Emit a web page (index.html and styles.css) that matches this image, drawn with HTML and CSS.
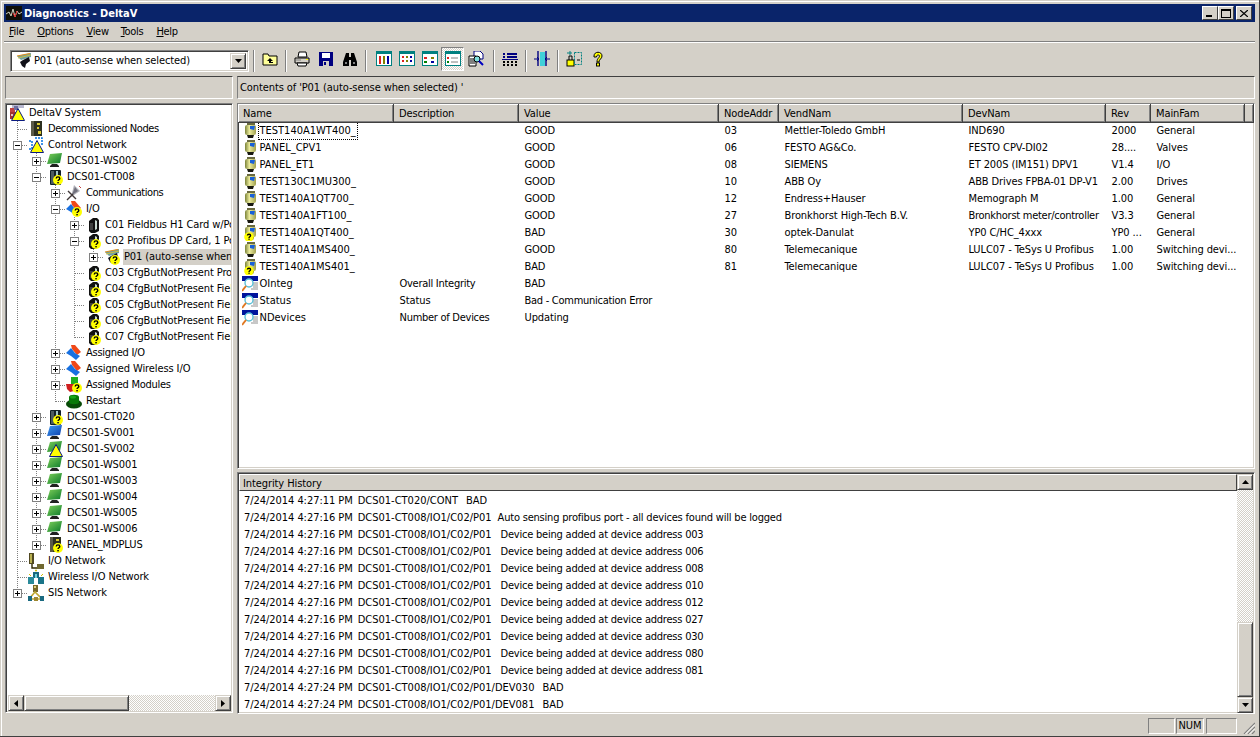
FILE: index.html
```html
<!DOCTYPE html>
<html lang="en">
<head>
<meta charset="utf-8">
<title>Diagnostics - DeltaV</title>
<link rel="stylesheet" href="styles.css">
</head>
<body>
<svg class="defs" width="0" height="0" aria-hidden="true">
  <defs>
    <linearGradient id="gm" x1="0" y1="0" x2="1" y2="1"><stop offset="0" stop-color="#7fd05a"/><stop offset="1" stop-color="#0a7a2a"/></linearGradient>
    <linearGradient id="bm" x1="0" y1="0" x2="1" y2="1"><stop offset="0" stop-color="#3f9bf0"/><stop offset="1" stop-color="#0a3fb0"/></linearGradient>
    <linearGradient id="dv" x1="0" y1="0" x2="1" y2="0"><stop offset="0" stop-color="#7a8238"/><stop offset=".4" stop-color="#ecec9c"/><stop offset="1" stop-color="#a0a050"/></linearGradient>
    <symbol id="q" viewBox="0 0 16 16"><circle cx="11" cy="11" r="5" fill="#ffff00"/><path d="M9.2 9.4c0-2 3.6-2 3.600 0 0 1.300-1.800 1.300-1.800 2.700" fill="none" stroke="#000" stroke-width="1.400"/><rect x="10.300" y="13" width="1.500" height="1.400" fill="#000"/></symbol>
    <symbol id="warn" viewBox="0 0 16 16"><path d="M9 3.500 15.500 15.500H2.500Z" fill="#ffff00" stroke="#0a1a80" stroke-width="1"/></symbol>
    <symbol id="sys" viewBox="0 0 16 16"><rect x="3" y="0" width="12" height="3" fill="#b8b8d0"/><rect x="1" y="3" width="5" height="4" fill="#c04040"/><rect x="1" y="7" width="6" height="7" fill="#a03030"/><rect x="2" y="9" width="2" height="2" fill="#e0c0c0"/><rect x="5" y="1" width="4" height="4" fill="#7070a0"/></symbol>
    <symbol id="decom" viewBox="0 0 16 16"><rect x="3" y="0" width="11" height="15" fill="#2c3020"/><rect x="3" y="0" width="3" height="15" fill="#5a5a48"/><rect x="9" y="2" width="3" height="2" fill="#d8c830"/><rect x="9" y="6" width="2" height="2" fill="#d8c830"/><rect x="10" y="10" width="3" height="3" fill="#d8c830"/></symbol>
    <symbol id="net" viewBox="0 0 16 16"><path d="M1 4H4V12H1M7 1H14V8" fill="none" stroke="#0070e0" stroke-width="1.500" stroke-dasharray="2 1"/></symbol>
    <symbol id="mon" viewBox="0 0 16 16"><path d="M3 1 15 0 13 10 0 11Z" fill="url(#gm)"/><path d="M5 11H10L12 13V14H3V13Z" fill="#202020"/></symbol>
    <symbol id="monb" viewBox="0 0 16 16"><path d="M3 1 15 0 13 10 0 11Z" fill="url(#bm)"/><path d="M5 11H10L12 13V14H3V13Z" fill="#202020"/></symbol>
    <symbol id="ctrl" viewBox="0 0 16 16"><rect x="3" y="1" width="11" height="15" rx="1" fill="#102028"/><rect x="4" y="2" width="3" height="13" fill="#4a5a60"/><rect x="9" y="2" width="2" height="7" fill="#a0c8c8"/></symbol>
    <symbol id="card" viewBox="0 0 16 16"><path d="M4 4 8 1H12L14 3V14L10 16H6L4 14Z" fill="#101010"/><path d="M10 3 12 4V12L10 13Z" fill="#c8d8d0"/><rect x="5" y="6" width="3" height="7" fill="#404040"/></symbol>
    <symbol id="comm" viewBox="0 0 16 16"><path d="M8 0 14 6 5 12Z" fill="#b0b0b8"/><path d="M9 2 12 6 6 10Z" fill="#70707c"/><path d="M2 6 10 14M1 15 7 9" stroke="#403838" stroke-width="1.400"/><path d="M13 1 15 3" stroke="#c04040"/></symbol>
    <symbol id="io" viewBox="0 0 16 16"><path d="M5 0H9L15 7 11 10 6 4Z" fill="#f04818"/><path d="M0 8 5 3 9 8 14 11 10 15 5 11Z" fill="#1870e0"/></symbol>
    <symbol id="amod" viewBox="0 0 16 16"><rect x="5" y="0" width="7" height="7" fill="#20b020"/><path d="M0 7H8V14L4 15 1 12Z" fill="#d02020"/><rect x="8" y="7" width="5" height="3" fill="#108010"/></symbol>
    <symbol id="rst" viewBox="0 0 16 16"><ellipse cx="8" cy="11" rx="8" ry="4.500" fill="#064a06"/><path d="M3 9V4C3 1 13 1 13 4V9C13 12 3 12 3 9Z" fill="#087808"/><ellipse cx="7" cy="4" rx="3" ry="1.500" fill="#18a818"/></symbol>
    <symbol id="port" viewBox="0 0 16 16"><path d="M1 3 15 0V4L5 7Z" fill="#70a0a0"/><path d="M1 3 14 0.500" stroke="#e09020" stroke-width="1.200"/><path d="M2 5 15 2" stroke="#d0c040"/><path d="M7 7 13 4 14 8 10 11 9 15 6 13 4 9Z" fill="#101018"/></symbol>
    <symbol id="ionet" viewBox="0 0 16 16"><rect x="1" y="0" width="5" height="11" fill="#504820"/><rect x="2" y="1" width="2" height="9" fill="#b8b050"/><path d="M4 11V15H9" fill="none" stroke="#302800" stroke-width="1.400"/><rect x="9" y="11" width="7" height="5" fill="#706830"/></symbol>
    <symbol id="wnet" viewBox="0 0 16 16"><circle cx="8" cy="1.500" r="1" fill="#d0c000"/><rect x="5" y="3" width="6" height="6" fill="#1a6a80"/><rect x="0" y="8" width="6" height="7" fill="#2a8a9a"/><rect x="10" y="8" width="6" height="7" fill="#1a7488"/><rect x="7" y="5" width="2" height="4" fill="#70d0d8"/><path d="M1 5 3 7M15 5 13 7" stroke="#d0c000"/></symbol>
    <symbol id="sis" viewBox="0 0 16 16"><rect x="5" y="0" width="5" height="7" fill="#786828"/><rect x="6" y="1" width="2" height="2" fill="#e0d080"/><path d="M1 14 7 7 14 14Z" fill="none" stroke="#c0a830" stroke-width="1.600"/><rect x="0" y="11" width="4" height="5" fill="#1a6a80"/><rect x="12" y="11" width="4" height="5" fill="#1a6a80"/><rect x="6" y="12" width="4" height="4" fill="#a08830"/></symbol>
    <symbol id="dev" viewBox="0 0 16 16"><rect x="2" y="2" width="11" height="10" rx="2" fill="url(#dv)"/><rect x="4" y="0" width="8" height="2" fill="#6a6a40"/><path d="M7 3H12L11 7 7 6Z" fill="#1860d8"/><path d="M4 12H11L10 15H5Z" fill="#181810"/></symbol>
    <symbol id="qdev" viewBox="0 0 16 16"><circle cx="6" cy="12" r="4.800" fill="#ffff00"/><path d="M4.400 10.600c0-1.800 3.200-1.800 3.200 0 0 1.200-1.600 1.200-1.600 2.400" fill="none" stroke="#000" stroke-width="1.300"/><rect x="5.400" y="13.600" width="1.300" height="1.200" fill="#000"/></symbol>
    <symbol id="param" viewBox="0 0 16 16"><rect x="0" y="0" width="16" height="5" fill="#00149c"/><path d="M11 7H16M11 9H16M11 11H16M9 13H16" stroke="#909090"/><circle cx="7" cy="7" r="4" fill="#fff" stroke="#58c0d8" stroke-width="1.400"/><path d="M4 10 0 15" stroke="#e07820" stroke-width="2"/></symbol>
    <symbol id="wave" viewBox="0 0 16 16"><rect width="16" height="14" fill="#101008"/><path d="M0 8 3 6 5 10 7 3 9 11 11 5 13 8 16 6" fill="none" stroke="#d0d0c0"/><path d="M7 7 9 11 11 5" fill="none" stroke="#e02020"/></symbol>
    <symbol id="t-up" viewBox="0 0 16 16"><path d="M1 3H6L7 5H15V14H1Z" fill="#ffff99" stroke="#000"/><path d="M8 7 5 10H7V12H11V11H9V10H11Z" fill="#000"/></symbol>
    <symbol id="t-print" viewBox="0 0 16 16"><path d="M5 1H12L13 6H4Z" fill="#fff" stroke="#000"/><path d="M1 7H15V12H1Z" fill="#d4d0c8" stroke="#000"/><path d="M3 12H13L12 15H4Z" fill="#fff" stroke="#000"/><path d="M2 9H7" stroke="#808080"/><rect x="12" y="8" width="2" height="1" fill="#ff0"/></symbol>
    <symbol id="t-save" viewBox="0 0 16 16"><rect x="1" y="1" width="14" height="14" fill="#000080"/><rect x="4" y="2" width="8" height="5" fill="#fff"/><rect x="5" y="10" width="6" height="5" fill="#d4d0c8"/><rect x="6" y="11" width="2" height="3" fill="#000080"/></symbol>
    <symbol id="t-find" viewBox="0 0 16 16"><path d="M4 2H7V6H9V2H12L15 11V15H9V9H7V15H1V11Z" fill="#000"/><rect x="3" y="11" width="2" height="2" fill="#808080"/><rect x="11" y="11" width="2" height="2" fill="#808080"/></symbol>
    <symbol id="t-v1" viewBox="0 0 16 16"><rect x=".5" y=".5" width="15" height="14" fill="#fff" stroke="#008080"/><rect x="1" y="1" width="14" height="2" fill="#008080"/><rect x="3" y="5" width="2" height="8" fill="#e02020"/><rect x="7" y="5" width="2" height="8" fill="#808000"/><rect x="11" y="5" width="2" height="8" fill="#0000a0"/></symbol>
    <symbol id="t-v2" viewBox="0 0 16 16"><rect x=".5" y=".5" width="15" height="14" fill="#fff" stroke="#008080"/><rect x="1" y="1" width="14" height="2" fill="#008080"/><path d="M3 5H5V7H3ZM3 9H5V11H3Z" fill="#e02020"/><path d="M7 5H9V7H7ZM7 9H9V11H7Z" fill="#808000"/><path d="M11 5H13V7H11ZM11 9H13V11H11Z" fill="#0000a0"/></symbol>
    <symbol id="t-v3" viewBox="0 0 16 16"><rect x=".5" y=".5" width="15" height="14" fill="#fff" stroke="#008080"/><rect x="1" y="1" width="14" height="2" fill="#008080"/><path d="M2 6H5V8H2Z" fill="#e02020"/><path d="M2 10H5V12H2Z" fill="#008000"/><path d="M9 6H12V8H9Z" fill="#808000"/><path d="M9 10H12V12H9Z" fill="#0000a0"/></symbol>
    <symbol id="t-v4" viewBox="0 0 16 16"><rect x=".5" y=".5" width="15" height="14" fill="#fff" stroke="#008080"/><rect x="1" y="1" width="14" height="2" fill="#008080"/><path d="M2 6H4V8H2Z" fill="#e02020"/><path d="M2 10H4V12H2Z" fill="#008000"/><path d="M6 7H13M6 11H13" stroke="#808080"/></symbol>
    <symbol id="t-look" viewBox="0 0 16 16"><path d="M6 0H12L15 3V8H6Z" fill="#fff" stroke="#000080"/><path d="M1 5H8V15H1Z" fill="#fff" stroke="#000"/><path d="M2 8H7M2 10H7M2 12H7" stroke="#000"/><circle cx="9" cy="8" r="3" fill="#80e0e0" stroke="#000"/><path d="M11 10 15 14" stroke="#0000c0" stroke-width="2"/></symbol>
    <symbol id="t-list" viewBox="0 0 16 16"><path d="M1 2H3V4H1ZM5 2H15V4H5ZM1 5H3V7H1ZM5 5H15V7H5Z" fill="#000080"/><rect x="0" y="8" width="16" height="1" fill="#000080"/><path d="M1 10H3V12H1ZM5 10H7V12H5ZM9 10H11V12H9ZM13 10H15V12H13ZM1 13H3V15H1ZM5 13H7V15H5ZM9 13H11V15H9ZM13 13H15V15H13Z" fill="#000"/></symbol>
    <symbol id="t-split" viewBox="0 0 16 16"><rect x="6" y="1" width="5" height="14" fill="#40d0d8"/><path d="M4 0V15M12 0V15" stroke="#000080" stroke-width="1.400"/><path d="M0 8H5M3 6 5 8 3 10M16 8H11M13 6 11 8 13 10" fill="none" stroke="#000080"/></symbol>
    <symbol id="t-lock" viewBox="0 0 16 16"><rect x="1" y="9" width="7" height="6" fill="#ffff00" stroke="#000"/><path d="M3 9V5H6V9" fill="none" stroke="#000"/><rect x="8.500" y="1.500" width="7" height="12" fill="none" stroke="#008080" stroke-dasharray="2 1"/><path d="M1 2H6M4 0V4" stroke="#008080"/><path d="M11 9H14" stroke="#000"/></symbol>
    <symbol id="t-help" viewBox="0 0 16 16"><path d="M4 5C4 0 12 0 12 5 12 8 9 8 9 11H7C7 7 9.500 7 9.500 5 9.500 3.500 6.500 3.500 6.500 6H4Z" fill="#ffff00" stroke="#000"/><rect x="6.500" y="12" width="3" height="3" fill="#ffff00" stroke="#000"/></symbol>
    <symbol id="a-down" viewBox="0 0 7 4"><path d="M0 0H7L3.500 4Z" fill="#000"/></symbol>
    <symbol id="a-up" viewBox="0 0 7 4"><path d="M0 4H7L3.500 0Z" fill="#000"/></symbol>
    <symbol id="a-left" viewBox="0 0 4 7"><path d="M4 0V7L0 3.500Z" fill="#000"/></symbol>
    <symbol id="a-right" viewBox="0 0 4 7"><path d="M0 0V7L4 3.500Z" fill="#000"/></symbol>
  </defs>
</svg>

<div class="window">
  <header class="titlebar">
    <svg class="title-icon"><use href="#wave"/></svg>
    <span class="title-text">Diagnostics - DeltaV</span>
    <div class="caption-btns">
      <span class="cap"><i class="cap-min"></i></span>
      <span class="cap"><i class="cap-max"></i></span>
      <span class="cap cap-close"><svg class="cap-x" viewBox="0 0 8 7"><path d="M0 0 8 7M8 0 0 7" stroke="#000" stroke-width="1.300"/></svg></span>
    </div>
  </header>

  <nav class="menubar">
    <span class="menu m-file"><u>F</u>ile</span>
    <span class="menu m-opt"><u>O</u>ptions</span>
    <span class="menu m-view"><u>V</u>iew</span>
    <span class="menu m-tools"><u>T</u>ools</span>
    <span class="menu m-help"><u>H</u>elp</span>
  </nav>

  <div class="toolbar">
    <div class="combo">
      <svg class="ic combo-ic"><use href="#port"/></svg>
      <span class="combo-text">P01 (auto-sense when selected)</span>
      <span class="sb-btn combo-btn"><svg class="ar-h"><use href="#a-down"/></svg></span>
    </div>
    <i class="sep"></i>
    <span class="tb"><svg class="ic"><use href="#t-up"/></svg></span>
    <i class="sep"></i>
    <div class="tgroup">
      <span class="tb"><svg class="ic"><use href="#t-print"/></svg></span>
      <span class="tb"><svg class="ic"><use href="#t-save"/></svg></span>
      <span class="tb"><svg class="ic"><use href="#t-find"/></svg></span>
    </div>
    <i class="sep"></i>
    <div class="tgroup-views">
      <span class="tb"><svg class="ic"><use href="#t-v1"/></svg></span>
      <span class="tb"><svg class="ic"><use href="#t-v2"/></svg></span>
      <span class="tb"><svg class="ic"><use href="#t-v3"/></svg></span>
      <span class="tb tb-on"><svg class="ic"><use href="#t-v4"/></svg></span>
      <span class="tb"><svg class="ic"><use href="#t-look"/></svg></span>
    </div>
    <i class="sep"></i>
    <span class="tb"><svg class="ic"><use href="#t-list"/></svg></span>
    <i class="sep"></i>
    <span class="tb"><svg class="ic"><use href="#t-split"/></svg></span>
    <i class="sep"></i>
    <div class="tgroup">
      <span class="tb"><svg class="ic"><use href="#t-lock"/></svg></span>
      <span class="tb"><svg class="ic"><use href="#t-help"/></svg></span>
    </div>
  </div>

  <main class="main">
    <section class="col-left">
      <div class="subhead subhead-left"></div>
      <div class="pane tree-pane">
        <div class="tree">
          <div class="row"><svg class="ic"><use href="#sys"/><use href="#warn"/></svg><span class="lb">DeltaV System</span></div>
          <div class="row"><i class="g t"></i><svg class="ic"><use href="#decom"/></svg><span class="lb tight">Decommissioned Nodes</span></div>
          <div class="row"><i class="g t"><b class="pm minus"></b></i><svg class="ic"><use href="#net"/><use href="#warn"/></svg><span class="lb">Control Network</span></div>
          <div class="row"><i class="g v"></i><i class="g t"><b class="pm plus"></b></i><svg class="ic"><use href="#mon"/></svg><span class="lb">DCS01-WS002</span></div>
          <div class="row"><i class="g v"></i><i class="g t"><b class="pm minus"></b></i><svg class="ic"><use href="#ctrl"/><use href="#q"/></svg><span class="lb">DCS01-CT008</span></div>
          <div class="row"><i class="g v"></i><i class="g v"></i><i class="g t"><b class="pm plus"></b></i><svg class="ic"><use href="#comm"/></svg><span class="lb tight">Communications</span></div>
          <div class="row"><i class="g v"></i><i class="g v"></i><i class="g t"><b class="pm minus"></b></i><svg class="ic"><use href="#io"/><use href="#q"/></svg><span class="lb">I/O</span></div>
          <div class="row"><i class="g v"></i><i class="g v"></i><i class="g v"></i><i class="g t"><b class="pm plus"></b></i><svg class="ic"><use href="#card"/></svg><span class="lb">C01 Fieldbus H1 Card w/Power</span></div>
          <div class="row"><i class="g v"></i><i class="g v"></i><i class="g v"></i><i class="g t"><b class="pm minus"></b></i><svg class="ic"><use href="#card"/><use href="#q"/></svg><span class="lb">C02 Profibus DP Card, 1 Port</span></div>
          <div class="row"><i class="g v"></i><i class="g v"></i><i class="g v"></i><i class="g v"></i><i class="g l"><b class="pm plus"></b></i><svg class="ic"><use href="#port"/><use href="#q"/></svg><span class="lb lb-sel">P01 (auto-sense when selected)</span></div>
          <div class="row"><i class="g v"></i><i class="g v"></i><i class="g v"></i><i class="g t"></i><svg class="ic"><use href="#card"/><use href="#q"/></svg><span class="lb">C03 CfgButNotPresent Profibus</span></div>
          <div class="row"><i class="g v"></i><i class="g v"></i><i class="g v"></i><i class="g t"></i><svg class="ic"><use href="#card"/><use href="#q"/></svg><span class="lb">C04 CfgButNotPresent Fieldbus</span></div>
          <div class="row"><i class="g v"></i><i class="g v"></i><i class="g v"></i><i class="g t"></i><svg class="ic"><use href="#card"/><use href="#q"/></svg><span class="lb">C05 CfgButNotPresent Fieldbus</span></div>
          <div class="row"><i class="g v"></i><i class="g v"></i><i class="g v"></i><i class="g t"></i><svg class="ic"><use href="#card"/><use href="#q"/></svg><span class="lb">C06 CfgButNotPresent Fieldbus</span></div>
          <div class="row"><i class="g v"></i><i class="g v"></i><i class="g v"></i><i class="g l"></i><svg class="ic"><use href="#card"/><use href="#q"/></svg><span class="lb">C07 CfgButNotPresent Fieldbus</span></div>
          <div class="row"><i class="g v"></i><i class="g v"></i><i class="g t"><b class="pm plus"></b></i><svg class="ic"><use href="#io"/></svg><span class="lb tight2">Assigned I/O</span></div>
          <div class="row"><i class="g v"></i><i class="g v"></i><i class="g t"><b class="pm plus"></b></i><svg class="ic"><use href="#io"/></svg><span class="lb">Assigned Wireless I/O</span></div>
          <div class="row"><i class="g v"></i><i class="g v"></i><i class="g t"><b class="pm plus"></b></i><svg class="ic"><use href="#amod"/><use href="#q"/></svg><span class="lb tight2">Assigned Modules</span></div>
          <div class="row"><i class="g v"></i><i class="g v"></i><i class="g l"></i><svg class="ic"><use href="#rst"/></svg><span class="lb">Restart</span></div>
          <div class="row"><i class="g v"></i><i class="g t"><b class="pm plus"></b></i><svg class="ic"><use href="#ctrl"/><use href="#q"/></svg><span class="lb">DCS01-CT020</span></div>
          <div class="row"><i class="g v"></i><i class="g t"><b class="pm plus"></b></i><svg class="ic"><use href="#monb"/></svg><span class="lb">DCS01-SV001</span></div>
          <div class="row"><i class="g v"></i><i class="g t"><b class="pm plus"></b></i><svg class="ic"><use href="#mon"/><use href="#warn"/></svg><span class="lb">DCS01-SV002</span></div>
          <div class="row"><i class="g v"></i><i class="g t"><b class="pm plus"></b></i><svg class="ic"><use href="#mon"/></svg><span class="lb">DCS01-WS001</span></div>
          <div class="row"><i class="g v"></i><i class="g t"><b class="pm plus"></b></i><svg class="ic"><use href="#mon"/></svg><span class="lb">DCS01-WS003</span></div>
          <div class="row"><i class="g v"></i><i class="g t"><b class="pm plus"></b></i><svg class="ic"><use href="#mon"/></svg><span class="lb">DCS01-WS004</span></div>
          <div class="row"><i class="g v"></i><i class="g t"><b class="pm plus"></b></i><svg class="ic"><use href="#mon"/></svg><span class="lb">DCS01-WS005</span></div>
          <div class="row"><i class="g v"></i><i class="g t"><b class="pm plus"></b></i><svg class="ic"><use href="#mon"/></svg><span class="lb">DCS01-WS006</span></div>
          <div class="row"><i class="g v"></i><i class="g l"><b class="pm plus"></b></i><svg class="ic"><use href="#decom"/><use href="#q"/></svg><span class="lb">PANEL_MDPLUS</span></div>
          <div class="row"><i class="g t"></i><svg class="ic"><use href="#ionet"/></svg><span class="lb">I/O Network</span></div>
          <div class="row"><i class="g t"></i><svg class="ic"><use href="#wnet"/></svg><span class="lb">Wireless I/O Network</span></div>
          <div class="row"><i class="g l"><b class="pm plus"></b></i><svg class="ic"><use href="#sis"/></svg><span class="lb">SIS Network</span></div>
        </div>
        <div class="hscroll">
          <span class="sb-btn"><svg class="ar-v"><use href="#a-left"/></svg></span>
          <span class="hthumb"></span>
          <span class="dither"></span>
          <span class="sb-btn"><svg class="ar-v"><use href="#a-right"/></svg></span>
        </div>
      </div>
    </section>

    <section class="col-right">
      <div class="subhead subhead-text">Contents of 'P01 (auto-sense when selected) '</div>
      <div class="pane list-pane">
        <table class="list">
          <colgroup><col class="c1"><col class="c2"><col class="c3"><col class="c4"><col class="c5"><col class="c6"><col class="c7"><col class="c8"><col></colgroup>
          <thead>
            <tr><th class="first">Name</th><th>Description</th><th>Value</th><th>NodeAddr</th><th>VendNam</th><th>DevNam</th><th>Rev</th><th>MainFam</th><th></th></tr>
          </thead>
          <tbody>
            <tr><td class="first"><svg class="ic"><use href="#dev"/></svg><span class="nm focus">TEST140A1WT400_</span></td><td></td><td>GOOD</td><td>03</td><td>Mettler-Toledo GmbH</td><td>IND690</td><td>2000</td><td>General</td><td></td></tr>
            <tr><td class="first"><svg class="ic"><use href="#dev"/></svg><span class="nm">PANEL_CPV1</span></td><td></td><td>GOOD</td><td>06</td><td>FESTO AG&amp;Co.</td><td>FESTO CPV-DI02</td><td>28....</td><td>Valves</td><td></td></tr>
            <tr><td class="first"><svg class="ic"><use href="#dev"/></svg><span class="nm">PANEL_ET1</span></td><td></td><td>GOOD</td><td>08</td><td>SIEMENS</td><td>ET 200S (IM151) DPV1</td><td>V1.4</td><td>I/O</td><td></td></tr>
            <tr><td class="first"><svg class="ic"><use href="#dev"/></svg><span class="nm">TEST130C1MU300_</span></td><td></td><td>GOOD</td><td>10</td><td>ABB Oy</td><td>ABB Drives FPBA-01 DP-V1</td><td>2.00</td><td>Drives</td><td></td></tr>
            <tr><td class="first"><svg class="ic"><use href="#dev"/></svg><span class="nm">TEST140A1QT700_</span></td><td></td><td>GOOD</td><td>12</td><td>Endress+Hauser</td><td>Memograph M</td><td>1.00</td><td>General</td><td></td></tr>
            <tr><td class="first"><svg class="ic"><use href="#dev"/></svg><span class="nm">TEST140A1FT100_</span></td><td></td><td>GOOD</td><td>27</td><td>Bronkhorst High-Tech B.V.</td><td class="tight2">Bronkhorst meter/controller</td><td>V3.3</td><td>General</td><td></td></tr>
            <tr><td class="first"><svg class="ic"><use href="#dev"/><use href="#qdev"/></svg><span class="nm">TEST140A1QT400_</span></td><td></td><td>BAD</td><td>30</td><td>optek-Danulat</td><td>YP0 C/HC_4xxx</td><td>YP0 ...</td><td>General</td><td></td></tr>
            <tr><td class="first"><svg class="ic"><use href="#dev"/></svg><span class="nm">TEST140A1MS400_</span></td><td></td><td>GOOD</td><td>80</td><td>Telemecanique</td><td>LULC07 - TeSys U Profibus</td><td>1.00</td><td>Switching devi...</td><td></td></tr>
            <tr><td class="first"><svg class="ic"><use href="#dev"/><use href="#qdev"/></svg><span class="nm">TEST140A1MS401_</span></td><td></td><td>BAD</td><td>81</td><td>Telemecanique</td><td>LULC07 - TeSys U Profibus</td><td>1.00</td><td>Switching devi...</td><td></td></tr>
            <tr><td class="first"><svg class="ic ic-p"><use href="#param"/></svg><span class="nm">OInteg</span></td><td class="tight2">Overall Integrity</td><td>BAD</td><td></td><td></td><td></td><td></td><td></td><td></td></tr>
            <tr><td class="first"><svg class="ic ic-p"><use href="#param"/></svg><span class="nm">Status</span></td><td>Status</td><td class="tight2">Bad - Communication Error</td><td></td><td></td><td></td><td></td><td></td><td></td></tr>
            <tr><td class="first"><svg class="ic ic-p"><use href="#param"/></svg><span class="nm">NDevices</span></td><td class="tight2">Number of Devices</td><td>Updating</td><td></td><td></td><td></td><td></td><td></td><td></td></tr>
          </tbody>
        </table>
      </div>
      <div class="pane hist-pane">
        <div class="hist-main">
          <div class="hist-head">Integrity History</div>
          <div class="hist-lines">
            <div class="hl"><span class="when">7/24/2014 4:27:11 PM</span><span class="src">DCS01-CT020/CONT</span><span class="st-bad">BAD</span></div>
            <div class="hl"><span class="when">7/24/2014 4:27:16 PM</span><span class="src">DCS01-CT008/IO1/C02/P01</span><span class="msg-auto">Auto sensing profibus port - all devices found will be logged</span></div>
            <div class="hl"><span class="when">7/24/2014 4:27:16 PM</span><span class="src">DCS01-CT008/IO1/C02/P01</span><span class="msg">Device being added at device address 003</span></div>
            <div class="hl"><span class="when">7/24/2014 4:27:16 PM</span><span class="src">DCS01-CT008/IO1/C02/P01</span><span class="msg">Device being added at device address 006</span></div>
            <div class="hl"><span class="when">7/24/2014 4:27:16 PM</span><span class="src">DCS01-CT008/IO1/C02/P01</span><span class="msg">Device being added at device address 008</span></div>
            <div class="hl"><span class="when">7/24/2014 4:27:16 PM</span><span class="src">DCS01-CT008/IO1/C02/P01</span><span class="msg">Device being added at device address 010</span></div>
            <div class="hl"><span class="when">7/24/2014 4:27:16 PM</span><span class="src">DCS01-CT008/IO1/C02/P01</span><span class="msg">Device being added at device address 012</span></div>
            <div class="hl"><span class="when">7/24/2014 4:27:16 PM</span><span class="src">DCS01-CT008/IO1/C02/P01</span><span class="msg">Device being added at device address 027</span></div>
            <div class="hl"><span class="when">7/24/2014 4:27:16 PM</span><span class="src">DCS01-CT008/IO1/C02/P01</span><span class="msg">Device being added at device address 030</span></div>
            <div class="hl"><span class="when">7/24/2014 4:27:16 PM</span><span class="src">DCS01-CT008/IO1/C02/P01</span><span class="msg">Device being added at device address 080</span></div>
            <div class="hl"><span class="when">7/24/2014 4:27:16 PM</span><span class="src">DCS01-CT008/IO1/C02/P01</span><span class="msg">Device being added at device address 081</span></div>
            <div class="hl"><span class="when">7/24/2014 4:27:24 PM</span><span class="src">DCS01-CT008/IO1/C02/P01/DEV030</span><span class="st-bad">BAD</span></div>
            <div class="hl"><span class="when">7/24/2014 4:27:24 PM</span><span class="src">DCS01-CT008/IO1/C02/P01/DEV081</span><span class="st-bad">BAD</span></div>
          </div>
        </div>
        <div class="vscroll">
          <span class="sb-btn"><svg class="ar-h"><use href="#a-up"/></svg></span>
          <span class="dither"></span>
          <span class="vthumb"></span>
          <span class="sb-btn"><svg class="ar-h"><use href="#a-down"/></svg></span>
        </div>
      </div>
    </section>
  </main>

  <footer class="statusbar">
    <span class="st st-1"></span>
    <span class="st st-2">NUM</span>
    <span class="st st-3"></span>
    <svg class="grip" viewBox="0 0 12 12"><path d="M1 12 12 1M5 12 12 5M9 12 12 9" stroke="#808080" stroke-width="1.200"/><path d="M2.500 12 12 2.500M6.500 12 12 6.500" stroke="#fff"/></svg>
  </footer>
</div>
</body>
</html>
```

FILE: styles.css
```css
* { box-sizing: border-box; }
html, body { margin: 0; padding: 0; background: #d4d0c8; }
body { width: 1260px; height: 737px; overflow: hidden; font: 11px/1 "DejaVu Sans Condensed", "DejaVu Sans", sans-serif; letter-spacing: -0.1px; color: #000; }
.defs { position: absolute; }
i, b { font-style: normal; display: block; }
svg { display: block; }
.tight { letter-spacing: -0.42px; }
.tight2 { letter-spacing: -0.27px; }

.window { width: 1260px; height: 737px; display: flex; flex-direction: column; padding: 4px 4px 1px; background: #d4d0c8; border-right: 1px solid #404040; border-bottom: 1px solid #404040; box-shadow: inset 1px 1px #d4d0c8, inset 2px 2px #fff; }

.titlebar { height: 18px; flex: none; background: #0a246a; display: flex; align-items: center; padding: 0 3px 0 2px; color: #fff; }
.title-icon { width: 16px; height: 16px; margin-top: 2px; }
.title-text { font-weight: bold; margin-left: 2px; font-size: 11px; letter-spacing: 0; }
.caption-btns { margin-left: auto; display: flex; gap: 0; }
.cap { width: 16px; height: 14px; background: #d4d0c8; border: 1px solid; border-color: #fff #404040 #404040 #fff; display: flex; align-items: center; justify-content: center; position: relative; }
.cap-close { margin-left: 2px; }
.cap-min { width: 6px; height: 2px; background: #000; align-self: flex-end; margin: 0 3px 2px 0; }
.cap-max { width: 10px; height: 9px; border: 1px solid #000; border-top-width: 2px; }
.cap-x { width: 8px; height: 7px; }

.menubar { height: 20px; flex: none; display: flex; align-items: center; border-bottom: 1px solid #808080; letter-spacing: -0.3px; }
.menu { display: block; }
.m-file { margin-left: 5px; }
.m-opt { margin-left: 13px; }
.m-view { margin-left: 13px; }
.m-tools { margin-left: 12px; }
.m-help { margin-left: 13px; }

.toolbar { height: 34px; flex: none; display: flex; align-items: center; padding-left: 6px; border-top: 1px solid #fff; }
.combo { width: 239px; height: 22px; background: #fff; border: 1px solid; border-color: #808080 #fff #fff #808080; box-shadow: inset 1px 1px #404040, inset -1px -1px #d4d0c8; display: flex; align-items: center; padding: 2px 2px 2px 5px; margin-top: 2px; }
.combo-ic { margin-right: 2px; }
.combo-text { flex: 1; }
.combo-btn { height: 18px; width: 16px; }
.sep { width: 2px; height: 22px; background: #808080; border-right: 1px solid #fff; margin: 2px 3px 0 4px; }
.tb { width: 23px; height: 24px; display: flex; align-items: center; justify-content: center; margin-top: -2px; }
.tb-on { background: repeating-conic-gradient(#fff 0 25%, #d4d0c8 0 50%) 0 0 / 2px 2px; border: 1px solid; border-color: #808080 #fff #fff #808080; }
.tgroup { display: flex; gap: 1px; }
.tgroup-views { display: flex; margin: 0 2px; }
.ic { width: 16px; height: 16px; flex: none; overflow: visible; }

.main { flex: 1; min-height: 0; display: flex; gap: 4px; }
.col-left { width: 229px; flex: none; display: flex; flex-direction: column; }
.col-right { flex: 1; min-width: 0; display: flex; flex-direction: column; }
.subhead { height: 23px; flex: none; border-top: 1px solid #404040; border-bottom: 1px solid #fff; border-left: 1px solid #808080; border-right: 1px solid #fff; margin-bottom: 4px; }
.subhead-left { margin-left: 1px; }
.subhead-text { padding: 5px 0 0 2px; }
.pane { background: #fff; border: 1px solid; border-color: #808080 #fff #fff #808080; box-shadow: inset 1px 1px #404040, inset -1px -1px #d4d0c8; padding: 2px; overflow: hidden; }

.tree-pane { margin-left: 1px; flex: 1; min-height: 0; display: flex; flex-direction: column; margin-bottom: 1px; padding-right: 1px; }
.tree { flex: 1; min-height: 0; margin-top: -1px; overflow: hidden; }
.row { height: 16px; display: flex; align-items: center; white-space: nowrap; overflow: hidden; }
.row > .ic { margin-left: 1px; }
.lb { margin-left: 4px; line-height: 16px; padding-right: 4px; }
.lb-sel { background: #d4d0c8; margin-left: 3px; padding-left: 1px; }
.g { width: 19px; height: 16px; flex: none; display: flex; align-items: center; justify-content: center; margin-right: 0; background-repeat: no-repeat; }
.v { background-image: repeating-linear-gradient(#808080 0 1px, transparent 1px 2px); background-size: 1px 16px; background-position: 9px 0; }
.t { background-image: repeating-linear-gradient(#808080 0 1px, transparent 1px 2px), repeating-linear-gradient(90deg, #808080 0 1px, transparent 1px 2px); background-size: 1px 16px, 9px 1px; background-position: 9px 0, 10px 8px; }
.l { background-image: repeating-linear-gradient(#808080 0 1px, transparent 1px 2px), repeating-linear-gradient(90deg, #808080 0 1px, transparent 1px 2px); background-size: 1px 9px, 9px 1px; background-position: 9px 0, 10px 8px; }
.pm { width: 9px; height: 9px; border: 1px solid #808080; background-color: #fff; background-repeat: no-repeat; margin-top: 1px; }
.minus { background-image: linear-gradient(#000, #000); background-size: 5px 1px; background-position: 1px 3px; }
.plus { background-image: linear-gradient(#000, #000), linear-gradient(#000, #000); background-size: 5px 1px, 1px 5px; background-position: 1px 3px, 3px 1px; }

.hscroll { height: 16px; flex: none; display: flex; margin-bottom: -1px; }
.sb-btn { width: 16px; height: 16px; flex: none; background: #d4d0c8; border: 1px solid; border-color: #d4d0c8 #404040 #404040 #d4d0c8; box-shadow: inset 1px 1px #fff, inset -1px -1px #808080; display: flex; align-items: center; justify-content: center; }
.ar-h { width: 7px; height: 4px; }
.ar-v { width: 4px; height: 7px; }
.hthumb { width: 105px; flex: none; background: #d4d0c8; border: 1px solid; border-color: #d4d0c8 #404040 #404040 #d4d0c8; box-shadow: inset 1px 1px #fff, inset -1px -1px #808080; }
.dither { flex: 1; background: repeating-conic-gradient(#fff 0 25%, #d4d0c8 0 50%) 0 0 / 2px 2px; }

.list-pane { height: 366px; flex: none; padding: 0; }
.list { width: 100%; table-layout: fixed; border-collapse: collapse; border-spacing: 0; }
.c1 { width: 155px; } .c2 { width: 125px; } .c3 { width: 200px; } .c4 { width: 60px; } .c5 { width: 184px; } .c6 { width: 143px; } .c7 { width: 45px; } .c8 { width: 94px; }
.list th { height: 18px; padding: 0 0 0 5px; font-weight: normal; text-align: left; background: #d4d0c8; border: 1px solid; border-color: #fff #404040 #404040 #fff; box-shadow: inset -1px -1px #808080; }
.list th.first { padding-left: 4px; }
.list td { height: 17px; padding: 0 0 2px 6px; line-height: 15px; white-space: nowrap; overflow: hidden; }
.list td.first { padding: 0 0 0 4px; vertical-align: top; line-height: 1; }
.list td .ic { display: inline-block; vertical-align: top; }
.nm { display: inline-block; vertical-align: top; padding: 0 1px 1px; line-height: 15px; letter-spacing: 0; }
.focus { outline: 1px dotted #000; outline-offset: 0; }
.ic-p { margin-left: -1px; margin-right: 1px; }

.hist-pane { flex: 1; min-height: 0; margin-top: 3px; display: flex; padding: 1px 1px 0 1px; }
.hist-main { flex: 1; min-width: 0; display: flex; flex-direction: column; }
.hist-head { height: 17px; flex: none; padding: 3px 0 0 3px; background: #d4d0c8; border: 1px solid; border-color: #fff #404040 #404040 #fff; }
.hist-lines { padding-top: 1px; }
.hl { height: 17px; line-height: 17px; padding-left: 5px; white-space: nowrap; display: flex; letter-spacing: 0; }
.when { letter-spacing: -0.05px; }
.src { margin-left: 5px; }
.msg { margin-left: 9px; letter-spacing: -0.22px; }
.msg-auto { margin-left: 6px; letter-spacing: -0.2px; }
.st-bad { margin-left: 8px; }
.vscroll { width: 16px; flex: none; display: flex; flex-direction: column; }
.vthumb { height: 75px; flex: none; background: #d4d0c8; border: 1px solid; border-color: #d4d0c8 #404040 #404040 #d4d0c8; box-shadow: inset 1px 1px #fff, inset -1px -1px #808080; }

.statusbar { height: 21px; flex: none; display: flex; align-items: center; padding-top: 2px; letter-spacing: 0; }
.st { height: 16px; border: 1px solid; border-color: #808080 #fff #fff #808080; display: block; line-height: 14px; text-align: center; }
.st-1 { width: 27px; margin-left: auto; }
.st-2 { width: 28px; margin-left: 1px; }
.st-3 { width: 31px; margin-left: 2px; }
.grip { width: 12px; height: 12px; margin: 4px 0 0 6px; }
```
